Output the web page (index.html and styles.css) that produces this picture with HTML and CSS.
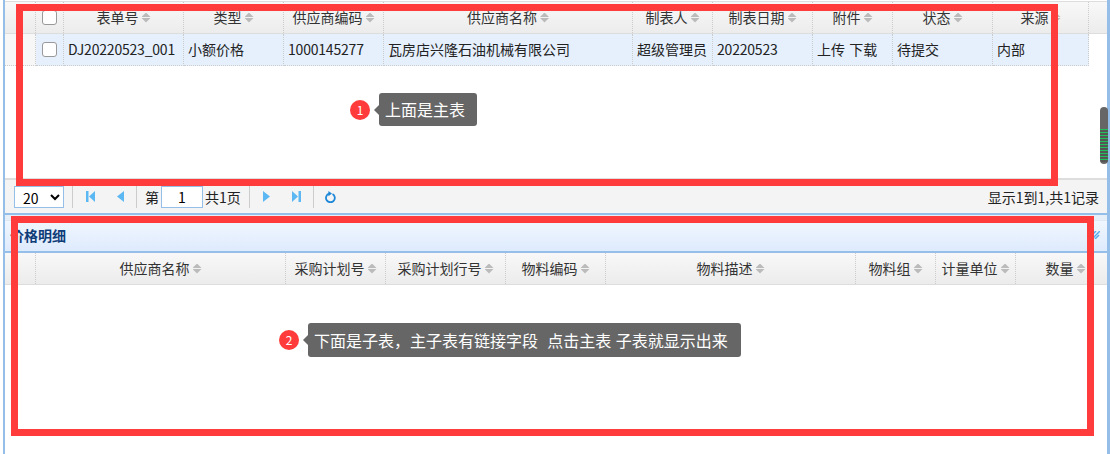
FILE: index.html
```html
<!DOCTYPE html>
<html lang="zh-CN">
<head>
    <meta charset="UTF-8">
    <meta name="viewport" content="width=device-width, initial-scale=1.0">
    <title>价格明细</title>
    <link rel="stylesheet" href="styles.css">
</head>
<body>
    <div class="page">
        <!-- main table -->
        <section class="main-panel">
            <div class="grid-body">
                <div class="grid-head">
                    <div class="cell w31"></div>
                    <div class="cell w28"><input class="check" type="checkbox"></div>
                    <div class="cell w120">表单号<i class="sort"></i></div>
                    <div class="cell w100">类型<i class="sort"></i></div>
                    <div class="cell w100">供应商编码<i class="sort"></i></div>
                    <div class="cell w249">供应商名称<i class="sort"></i></div>
                    <div class="cell w80">制表人<i class="sort"></i></div>
                    <div class="cell w100">制表日期<i class="sort"></i></div>
                    <div class="cell w80">附件<i class="sort"></i></div>
                    <div class="cell w100">状态<i class="sort"></i></div>
                    <div class="cell w96">来源<i class="sort"></i></div>
                </div>
                <div class="grid-row">
                    <div class="cell w31 row-num"></div>
                    <div class="cell w28 centered"><input class="check" type="checkbox"></div>
                    <div class="cell w120 code">DJ20220523_001</div>
                    <div class="cell w100">小额价格</div>
                    <div class="cell w100 code">1000145277</div>
                    <div class="cell w249">瓦房店兴隆石油机械有限公司</div>
                    <div class="cell w80">超级管理员</div>
                    <div class="cell w100 code">20220523</div>
                    <div class="cell w80">上传 下载</div>
                    <div class="cell w100">待提交</div>
                    <div class="cell w96">内部</div>
                </div>
            </div>

            <div class="pager">
                <select class="page-size">
                    <option>20</option>
                </select>
                <span class="sep"></span>
                <button class="page-btn">
                    <svg width="9" height="11" viewBox="0 0 9 11"><path d="M0 0h2.5v11H0zM9 0v11L3 5.5z"/></svg>
                </button>
                <button class="page-btn">
                    <svg width="7" height="11" viewBox="0 0 7 11"><path d="M7 0v11L0 5.5z"/></svg>
                </button>
                <span class="sep"></span>
                <span class="page-label">第</span>
                <input class="page-num" type="text" value="1">
                <span class="page-total">共1页</span>
                <span class="sep"></span>
                <button class="page-btn">
                    <svg width="7" height="11" viewBox="0 0 7 11"><path d="M0 0v11l7-5.5z"/></svg>
                </button>
                <button class="page-btn">
                    <svg width="9" height="11" viewBox="0 0 9 11"><path d="M0 0v11l6-5.5zM6.5 0H9v11H6.5z"/></svg>
                </button>
                <span class="sep"></span>
                <button class="page-btn">
                    <svg width="11" height="12" viewBox="0 0 11 12"><path d="M7.5 3A4.4 4.4 0 1 1 4 2.7" fill="none" stroke="#1e88d8" stroke-width="1.8"/><path d="M3.4 0l3.6 2.6-3.6 2.6z" fill="#1e88d8"/></svg>
                </button>
                <span class="page-info">显示1到1,共1记录</span>
            </div>
        </section>

        <!-- detail table -->
        <section class="detail-panel">
            <div class="panel-title">
                <span>价格明细</span>
                <svg class="collapse" width="8" height="8" viewBox="0 0 8 8"><path d="M0 4l4-4M0 8l8-8M3 8l4-4" fill="none" stroke="#58aeea" stroke-width="1.5"/></svg>
            </div>
            <div class="grid-head detail-head">
                <div class="cell w31"></div>
                <div class="cell w250">供应商名称<i class="sort"></i></div>
                <div class="cell w100">采购计划号<i class="sort"></i></div>
                <div class="cell w120">采购计划行号<i class="sort"></i></div>
                <div class="cell w100">物料编码<i class="sort"></i></div>
                <div class="cell w250">物料描述<i class="sort"></i></div>
                <div class="cell w80">物料组<i class="sort"></i></div>
                <div class="cell w80">计量单位<i class="sort"></i></div>
                <div class="cell w100">数量<i class="sort"></i></div>
            </div>
        </section>
    </div>

    <!-- annotations drawn over the screen -->
    <div class="mark mark-main"></div>
    <div class="mark mark-detail"></div>
    <div class="note note-main">
        <span class="badge">1</span>
        <span class="tip">上面是主表</span>
    </div>
    <div class="note note-detail">
        <span class="badge">2</span>
        <span class="tip">下面是子表，主子表有链接字段&nbsp; 点击主表 子表就显示出来</span>
    </div>
    <div class="scroll-thumb"></div>
</body>
</html>
```

FILE: styles.css
```css
* {
    box-sizing: border-box;
    margin: 0;
    padding: 0;
}

html, body {
    height: 454px;
    overflow: hidden;
    background: #fff;
}

body {
    font-family: "Noto Sans CJK SC", "Liberation Sans", sans-serif;
    font-size: 14px;
    word-spacing: 1px;
    color: #222;
}

.page {
    display: flex;
    flex-direction: column;
    height: 454px;
    margin-left: 3px;
    border-left: 2px solid #95bfe8;
    border-right: 3px solid #95bfe8;
}

/* Main table */
.main-panel {
    display: flex;
    flex-direction: column;
    height: 215px;
    border-bottom: 2px solid #95bfe8;
}

.grid-body {
    flex: 1;
    padding-top: 1px;
}

.grid-head {
    display: flex;
    height: 33px;
    border-top: 1px solid #ddd;
    border-bottom: 1px solid #ddd;
    background: linear-gradient(#f8f8f8, #ececec);
    color: #333;
}

.grid-row {
    display: flex;
    height: 32px;
}

.cell {
    flex: none;
    border-right: 1px dotted #ccc;
    line-height: 31px;
    white-space: nowrap;
    overflow: hidden;
}

.grid-head .cell {
    display: flex;
    justify-content: center;
    align-items: center;
}

.grid-row .cell {
    padding-left: 4px;
    background: #e6f0fd;
    border-bottom: 1px dotted #ccc;
}

.grid-row .row-num {
    background: #f7f7f7;
}

.grid-row .centered {
    display: flex;
    align-items: center;
    justify-content: center;
    padding-left: 0;
}

.grid-row .code {
    letter-spacing: -0.2px;
}

.w28 { width: 28px; }
.w31 { width: 31px; }
.w80 { width: 80px; }
.w96 { width: 96px; }
.w100 { width: 100px; }
.w120 { width: 120px; }
.w249 { width: 249px; }
.w250 { width: 250px; }

.check {
    appearance: none;
    display: block;
    width: 15px;
    height: 15px;
    background: #fff;
    border: 1px solid #999;
    border-radius: 3px;
}

/* sort arrows, up and down */
.sort {
    position: relative;
    flex: none;
    width: 9px;
    height: 10px;
    margin-left: 3px;
}

.sort::before,
.sort::after {
    content: "";
    position: absolute;
    left: 0;
    width: 9px;
    height: 5px;
    background: #bbb;
}

.sort::before {
    top: 0;
    clip-path: polygon(50% 0, 100% 90%, 0 90%);
}

.sort::after {
    bottom: 0;
    clip-path: polygon(0 10%, 100% 10%, 50% 100%);
}

/* Pager */
.pager {
    display: flex;
    align-items: center;
    height: 35px;
    padding: 0 8px 0 9px;
    background: #f4f4f4;
    border-top: 2px solid #ddd;
}

.page-size {
    width: 50px;
    height: 22px;
    padding-left: 4px;
    font: inherit;
    background: #fff;
    border: 1px solid #95bfe8;
    border-radius: 0;
}

.sep {
    flex: none;
    width: 1px;
    height: 22px;
    margin: 0 2px 0 8px;
    background: #ccc;
}

.page-btn {
    display: flex;
    align-items: center;
    justify-content: center;
    width: 30px;
    height: 22px;
    border: 0;
    background: none;
    fill: #5cb8f2;
}

.page-btn + .sep {
    margin-left: 1px;
}

.page-label {
    margin-left: 6px;
}

.page-num {
    width: 42px;
    height: 22px;
    margin: 0 2px;
    font: inherit;
    text-align: center;
    border: 1px solid #95bfe8;
    outline: none;
}

.page-info {
    margin-left: auto;
}

/* Detail table */
.detail-panel {
    padding-top: 5px;
    background: linear-gradient(#e6eef7 5px, transparent 5px);
}

.panel-title {
    display: flex;
    align-items: center;
    justify-content: space-between;
    height: 33px;
    padding: 0 7px 2px 5px;
    background: linear-gradient(#f0f6fe, #deebfd);
    border-top: 1px solid #dfe9f5;
    border-bottom: 2px solid #95bfe8;
    font-weight: bold;
    color: #0f3d78;
}

.detail-head {
    overflow: hidden;
    border-top: 0;
    height: 32px;
}

/* Annotations */
.mark {
    position: absolute;
    border: 7px solid #ff3b3b;
}

.mark-main {
    left: 16px;
    top: 4px;
    width: 1042px;
    height: 182px;
}

.mark-detail {
    left: 11px;
    top: 216px;
    width: 1083px;
    height: 220px;
}

.note {
    position: absolute;
    display: flex;
    align-items: center;
    font-size: 16px;
}

.note-main {
    left: 350px;
    top: 93px;
}

.note-detail {
    left: 279px;
    top: 323px;
}

.badge {
    width: 20px;
    height: 20px;
    margin-right: 9px;
    border-radius: 50%;
    background: #ff3b3b;
    color: #fff;
    font-size: 12px;
    line-height: 20px;
    text-align: center;
}

.tip {
    position: relative;
    height: 33px;
    padding: 0 12px 0 6px;
    border-radius: 3px;
    background: #666;
    color: #fff;
    line-height: 33px;
    white-space: pre;
}

.note-detail .tip {
    height: 34px;
    padding-right: 13px;
    line-height: 34px;
}

.tip::before {
    content: "";
    position: absolute;
    left: -5px;
    top: 50%;
    margin-top: -5px;
    border-top: 5px solid transparent;
    border-bottom: 5px solid transparent;
    border-right: 5px solid #666;
}

.scroll-thumb {
    position: absolute;
    left: 1100px;
    top: 107px;
    width: 8px;
    height: 57px;
    border-radius: 4px;
    background:
        repeating-linear-gradient(#22c05a 0 1px, #555 1px 3px) 0 22px / 100% 33px no-repeat,
        #666;
}
```
